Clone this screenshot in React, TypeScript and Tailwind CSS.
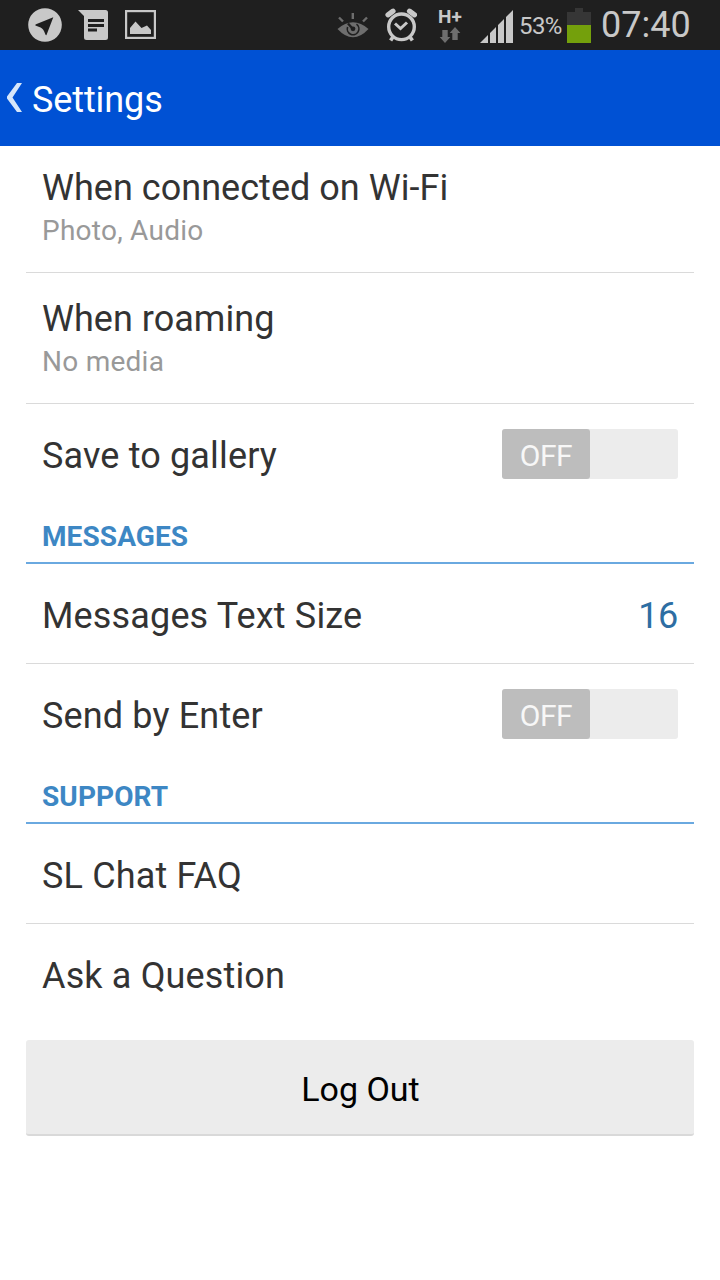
import React from "react";

const StatusBar: React.FC = () => {
  return (
    <div className="flex h-[50px] items-start bg-[#1f1f1f] text-[#c8c8c8]">
      <svg className="ml-7 mt-2 shrink-0" width="34" height="34" viewBox="0 0 34 34">
        <circle cx="17" cy="17" r="16.8" fill="#c8c8c8" />
        <path d="M25.3 9.3 L18.4 27.3 Q17.6 27.2 17.2 26 Q15.6 21 12.6 19.6 L7.4 17.4 Q7 16.6 8 16.2 Z" fill="#1f1f1f" />
      </svg>
      <svg className="ml-4 mt-2.5 shrink-0" width="30" height="30" viewBox="0 0 30 30">
        <path d="M0 0 H27.5 Q30 0 30 2.5 V27.5 Q30 30 27.5 30 H8.5 Q6 30 6 27.5 V6 Z" fill="#c8c8c8" />
        <path d="M10 9 H26 V12 H10 Z M10 14 H26 V17 H10 Z M10 18.5 H19 V21.5 H10 Z" fill="#1f1f1f" />
      </svg>
      <svg className="ml-[17px] mt-2.5 shrink-0" width="31" height="29" viewBox="0 0 31 29">
        <rect x="1.1" y="1.1" width="28.8" height="26.8" fill="none" stroke="#c8c8c8" strokeWidth="2.2" />
        <path d="M5 24 V18 L10.5 11.5 L16.5 18 L22 15.5 L26 20 V24 Z" fill="#c8c8c8" />
      </svg>

      <svg className="ml-[181px] mt-3 shrink-0" width="32" height="26" viewBox="0 0 32 26">
        <path d="M0.5 17 Q8 10.2 16 10.2 Q24 10.2 31.5 17 Q24 25.2 16 25.2 Q8 25.2 0.5 17 Z" fill="#6e6e6e" />
        <path d="M19.5 12.2 A5.8 5.8 0 1 1 10.6 15" fill="none" stroke="#1f1f1f" strokeWidth="1.6" />
        <circle cx="16" cy="16.8" r="2.4" fill="#1f1f1f" />
        <path d="M15.5 16.5 L11 11.5" stroke="#1f1f1f" strokeWidth="2.4" />
        <path d="M2 5.5 L6 9.5 M15.8 1 V7 M30 5.5 L26 9.5" stroke="#6e6e6e" strokeWidth="2.4" />
      </svg>
      <svg className="ml-4 mt-2 shrink-0" width="32" height="34" viewBox="0 0 32 34">
        <circle cx="16.5" cy="18.8" r="12.8" fill="none" stroke="#c8c8c8" strokeWidth="3.4" />
        <path d="M10 15.5 L15.5 20.5 L22 14.5" fill="none" stroke="#c8c8c8" strokeWidth="3" />
        <path d="M3 6.8 L8 3.2 M29.5 6.8 L24.5 3.2" stroke="#c8c8c8" strokeWidth="5.2" strokeLinecap="round" />
        <path d="M7.8 29.2 L5.6 32.6 M25.2 29.2 L27.4 32.6" stroke="#c8c8c8" strokeWidth="3.6" />
      </svg>
      <div className="ml-[21px] mt-[9px] flex w-6 shrink-0 flex-col">
        <span className="h-[17px] whitespace-nowrap text-[19px] font-bold leading-[15px]">H+</span>
        <svg width="24" height="18" viewBox="0 0 24 18">
          <path d="M4.3 4 H9.7 V11 H12.3 L7 17 L1.7 11 H4.3 Z" fill="#6e6e6e" />
          <path d="M14.3 14 H19.7 V7 H22.4 L17 1 L11.7 7 H14.3 Z" fill="#6e6e6e" />
        </svg>
      </div>
      <svg className="ml-[18px] mt-2.5 shrink-0" width="33" height="33" viewBox="0 0 33 33">
        <path d="M0 33 L8 25 V33 Z M10 33 V23 L16 17 V33 Z M18 33 V15 L24 9 V33 Z M26 33 V7 L33 0 V33 Z" fill="#c8c8c8" />
      </svg>
      <span className="ml-[6px] mt-3 w-12 shrink-0 whitespace-nowrap text-[24px] leading-7 tracking-[-0.6px]">53%</span>
      <svg className="mt-2 shrink-0" width="24" height="35" viewBox="0 0 24 35">
        <path d="M8 0 H16 V4 H24 V17 H0 V4 H8 Z" fill="#363636" />
        <rect y="17" width="24" height="18" fill="#74a00c" />
      </svg>
      <span className="ml-2.5 mt-[5px] whitespace-nowrap text-[36px] leading-10">07:40</span>
    </div>
  );
};

const Row: React.FC<{ title: string; children?: React.ReactNode; last?: boolean }> = ({
  title,
  children,
  last,
}) => (
  <div
    className={`flex h-[100px] items-center justify-between px-4 ${
      last ? "" : "border-b border-[#dadada]"
    }`}
  >
    <span className="pt-1 text-[36px] leading-[42px] tracking-[0.15px] text-[#333]">{title}</span>
    {children}
  </div>
);

const MediaRow: React.FC<{ title: string; value: string }> = ({ title, value }) => (
  <div className="flex h-[131px] flex-col border-b border-[#dadada] px-4 pt-[25px]">
    <span className="text-[36px] leading-[42px] tracking-[0.03px] text-[#333]">{title}</span>
    <span className="mt-1.5 text-[28px] leading-8 tracking-[0.25px] text-[#999]">{value}</span>
  </div>
);

const SectionTitle: React.FC<{ children: React.ReactNode }> = ({ children }) => (
  <div className="h-[60px] border-b-2 border-[#6aa9e0] px-4 pt-[17px] text-[28px] font-bold leading-8 tracking-[0.1px] text-[#3d87c4]">
    {children}
  </div>
);

const Toggle: React.FC = () => (
  <button className="flex h-[50px] w-44 rounded-[3px] bg-[#ececec]">
    <span className="flex h-full w-[88px] items-center justify-center rounded-[3px] bg-[#bdbdbd] pt-0.5 text-[30px] tracking-[-0.5px] text-[#f7f7f7]">
      OFF
    </span>
  </button>
);

export default function App() {
  return (
    <div className="flex h-[1280px] w-[720px] flex-col overflow-hidden bg-white font-['Roboto',sans-serif]">
      <StatusBar />
      <header className="flex h-24 shrink-0 items-center bg-[#0051d4] text-white">
        <svg className="mb-px ml-1.5 shrink-0" width="17" height="29" viewBox="0 0 17 29">
          <path d="M11 0 H16 L6.5 14.5 L16 29 H11 L1 15.5 V13.5 Z" fill="#d6e6fa" />
        </svg>
        <h1 className="ml-[9px] pt-1 text-[36px] leading-[42px] tracking-[-0.1px]">Settings</h1>
      </header>

      <main className="flex flex-col px-[26px]">
        <div className="-mt-1">
          <MediaRow title="When connected on Wi-Fi" value="Photo, Audio" />
        </div>
        <MediaRow title="When roaming" value="No media" />
        <Row title="Save to gallery" last>
          <Toggle />
        </Row>

        <SectionTitle>MESSAGES</SectionTitle>
        <Row title="Messages Text Size">
          <span className="pt-1 text-[36px] leading-[42px] tracking-[-0.3px] text-[#2d6ea3]">16</span>
        </Row>
        <Row title="Send by Enter" last>
          <Toggle />
        </Row>

        <SectionTitle>SUPPORT</SectionTitle>
        <Row title="SL Chat FAQ" />
        <Row title="Ask a Question" last />

        <button className="mt-4 h-24 rounded-[3px] border-b-2 border-[#d9d9d9] bg-[#ececec] pl-px pt-1 text-[34px] text-black">
          Log Out
        </button>
      </main>
    </div>
  );
}
